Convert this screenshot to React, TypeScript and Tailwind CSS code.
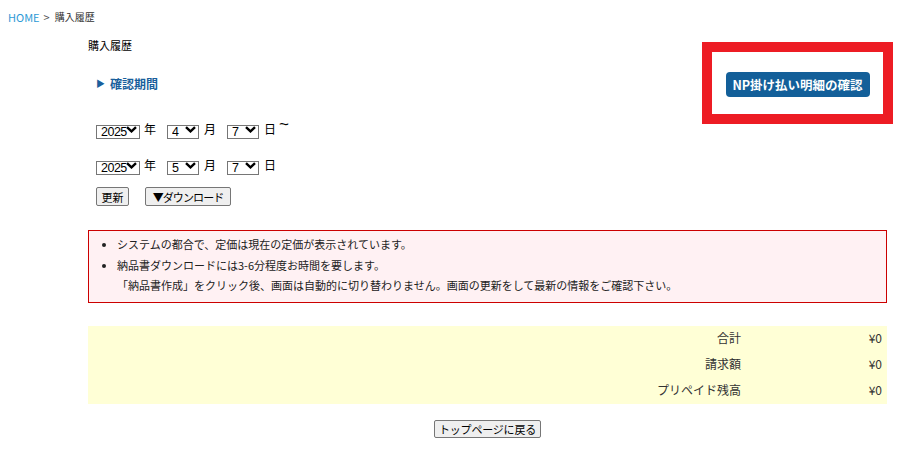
import React from "react";

const font = { fontFamily: '"Noto Sans CJK JP", "Noto Sans", sans-serif' };

function Chevron() {
  return (
    <svg width="11" height="7" viewBox="0 0 11 7" className="block">
      <path d="M1 1.2 L5.5 5.4 L10 1.2" fill="none" stroke="#000" strokeWidth="2.4" strokeLinejoin="miter" />
    </svg>
  );
}

function Sel({ value, w, options }: { value: string; w: string; options: string[] }) {
  return (
    <div className={`relative h-[14px] ${w}`}>
      <select
        defaultValue={value}
        className="appearance-none h-full w-full border border-[#767676] bg-white text-[12.5px] leading-[12px] tracking-[-0.5px] text-black pl-[4px] outline-none"
        style={{ fontFamily: '"Liberation Sans", Arial, sans-serif' }}
      >
        {options.map((o) => (
          <option key={o}>{o}</option>
        ))}
      </select>
      <div className="pointer-events-none absolute right-[3px] top-[4px]">
        <Chevron />
      </div>
    </div>
  );
}

function DateRow({ y, m, d, tilde }: { y: string; m: string; d: string; tilde?: boolean }) {
  const months = Array.from({ length: 12 }, (_, i) => String(i + 1));
  const days = Array.from({ length: 31 }, (_, i) => String(i + 1));
  return (
    <div className="flex items-center text-[12px] text-black h-[14px]">
      <Sel value={y} w="w-[44px]" options={["2024", "2025"]} />
      <span className="ml-[4px]">年</span>
      <span className="ml-[11px]" />
      <Sel value={m} w="w-[32px]" options={months} />
      <span className="ml-[5px]">月</span>
      <span className="ml-[11px]" />
      <Sel value={d} w="w-[32px]" options={days} />
      <span className="ml-[5px]">日</span>
      {tilde && (
        <span
          className="ml-[3px] -mt-[10px] text-[17px] leading-[15px]"
          style={{ fontFamily: '"Liberation Sans", Arial, sans-serif' }}
        >
          ~
        </span>
      )}
    </div>
  );
}

export default function App() {
  return (
    <div className="relative w-[913px] h-[451px] bg-white text-[#222]" style={font}>
      <div className="pl-[8px] pt-[10px] text-[11px] leading-[14px] flex items-center">
        <span className="text-[#2e9ad6]">HOME</span>
        <span className="ml-[4px] text-[#555]">&gt;</span>
        <span className="ml-[5px] text-[10px] text-[#333]">購入履歴</span>
      </div>

      <div className="ml-[88px] w-[799px]">
        <div className="mt-[14px] text-[11px] leading-[14px] text-black">購入履歴</div>

        <div className="mt-[24px] ml-[8px] flex items-center h-[16px] text-[#1a5f9c] font-bold">
          <span className="text-[9px]">▶</span>
          <span className="ml-[5px] text-[12px] leading-[16px]">確認期間</span>
        </div>

        <div className="mt-[30px] ml-[8px]">
          <DateRow y="2025" m="4" d="7" tilde />
        </div>
        <div className="mt-[22px] ml-[8px]">
          <DateRow y="2025" m="5" d="7" />
        </div>

        <div className="mt-[15px] ml-[8px] flex items-center gap-[16px]">
          <button className="h-[19px] w-[33px] border border-[#767676] bg-[#efefef] text-[11px] leading-[14px] text-black rounded-[2px]">
            更新
          </button>
          <button className="h-[19px] w-[86px] border border-[#767676] bg-[#efefef] text-[11px] tracking-[-0.9px] leading-[14px] text-black rounded-[2px]">
            ▼ダウンロード
          </button>
        </div>

        <div className="mt-[24px] border border-[#cc0000] bg-[#fff1f3] pt-[3px] pb-[6px] text-[11px] leading-[20.5px] text-[#222]">
          <ul className="list-disc pl-[28px]">
            <li>システムの都合で、定価は現在の定価が表示されています。</li>
            <li>
              納品書ダウンロードには3-6分程度お時間を要します。
              <br />
              「納品書作成」をクリック後、画面は自動的に切り替わりません。画面の更新をして最新の情報をご確認下さい。
            </li>
          </ul>
        </div>

        <div className="mt-[23px] bg-[#ffffd6] text-[12px] leading-[16px] text-[#333]">
          {[
            ["合計", "¥0"],
            ["請求額", "¥0"],
            ["プリペイド残高", "¥0"],
          ].map(([l, v]) => (
            <div key={l} className="grid grid-cols-[1fr_146px] h-[26px] items-center pb-[2px]">
              <div className="text-right">{l}</div>
              <div className="text-right pr-[5px]">{v}</div>
            </div>
          ))}
        </div>

        <div className="mt-[16px] flex justify-center">
          <button className="h-[18px] w-[107px] border border-[#767676] bg-[#efefef] text-[11px] tracking-[-0.2px] leading-[14px] text-black rounded-[2px]">
            トップページに戻る
          </button>
        </div>
      </div>

      <div className="absolute left-[702px] top-[42px] w-[191px] h-[82px] border-[10px] border-[#ed1c24] flex items-center justify-center">
        <button className="mt-[2px] h-[25px] w-[144px] rounded-[4px] bg-[#135f99] text-white text-[12.5px] font-bold leading-[25px]">
          NP掛け払い明細の確認
        </button>
      </div>
    </div>
  );
}
